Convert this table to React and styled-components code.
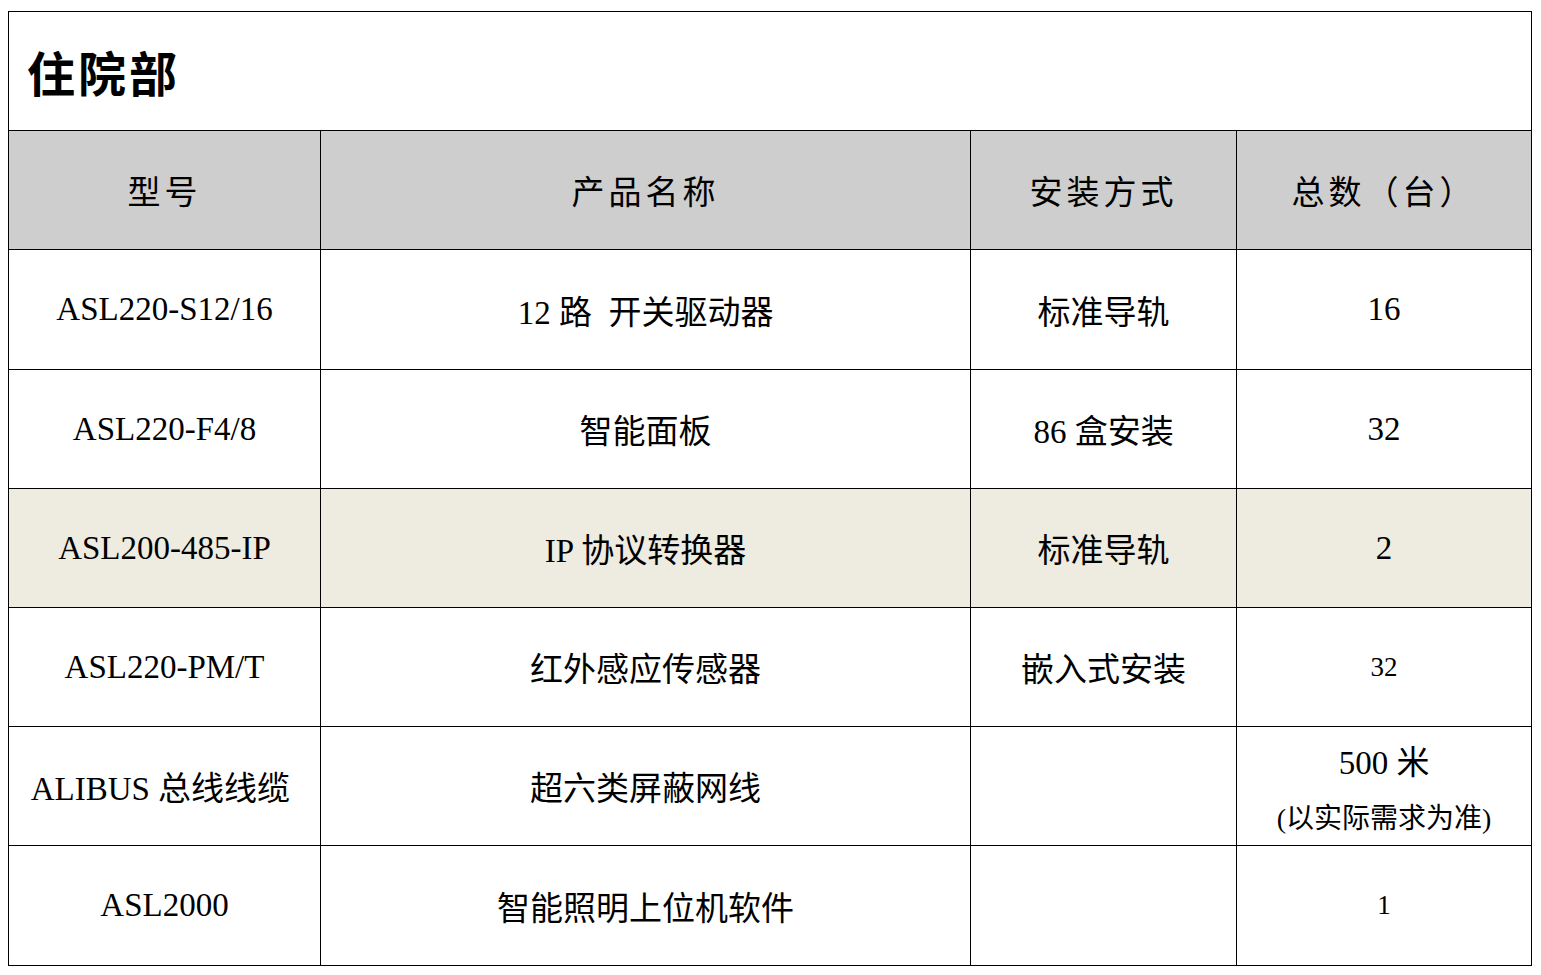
import styled, { createGlobalStyle } from 'styled-components';

const GlobalStyle = createGlobalStyle`
  body {
    margin: 0;
    background: #fff;
    font-family: "Liberation Serif", "Noto Sans CJK SC", serif;
    color: #000;
  }
`;

const Page = styled.div`
  padding: 11px 0 0 8px;
`;

const Table = styled.table`
  width: 1523px;
  border-collapse: collapse;
  table-layout: fixed;
  border: 1px solid #000;
`;

const TitleCell = styled.td`
  height: 118px;
  padding: 0 0 0 18px;
  font-size: 48px;
  font-weight: 700;
  letter-spacing: 3px;
  border: 1px solid #000;
`;

const HeadCell = styled.th`
  height: 116px;
  background: #cecece;
  font-size: 33px;
  font-weight: 400;
  letter-spacing: 4px;
  text-align: center;
  border: 1px solid #000;
`;

const Row = styled.tr`
  background: ${p => (p.$shade ? '#eeebe1' : '#fff')};
`;

const Cell = styled.td`
  height: ${p => (p.$tall ? '119px' : '118px')};
  padding: 0;
  font-size: ${p => (p.$small ? '27px' : '33px')};
  text-align: center;
  border: 1px solid #000;
  white-space: pre;
`;

const Note = styled.div`
  font-size: 28px;
  margin-top: 12px;
`;

const rows = [
  { model: 'ASL220-S12/16', name: '12 路  开关驱动器', mount: '标准导轨', count: '16', tall: true },
  { model: 'ASL220-F4/8', name: '智能面板', mount: '86 盒安装', count: '32' },
  { model: 'ASL200-485-IP', name: 'IP 协议转换器', mount: '标准导轨', count: '2', shade: true },
  { model: 'ASL220-PM/T', name: '红外感应传感器', mount: '嵌入式安装', count: '32', small: true },
  { model: 'ALIBUS 总线线缆 ', name: '超六类屏蔽网线', mount: '', count: '500 米', note: '(以实际需求为准)' },
  { model: 'ASL2000', name: '智能照明上位机软件', mount: '', count: '1', small: true, tall: true },
];

export default function App() {
  return (
    <Page>
      <GlobalStyle />
      <Table>
        <colgroup>
          <col style={{ width: 312 }} />
          <col style={{ width: 650 }} />
          <col style={{ width: 266 }} />
          <col style={{ width: 295 }} />
        </colgroup>
        <tbody>
          <tr>
            <TitleCell colSpan={4}>住院部</TitleCell>
          </tr>
          <tr>
            <HeadCell>型号</HeadCell>
            <HeadCell>产品名称</HeadCell>
            <HeadCell>安装方式</HeadCell>
            <HeadCell>总数（台）</HeadCell>
          </tr>
          {rows.map(r => (
            <Row key={r.model} $shade={r.shade}>
              <Cell $tall={r.tall}>{r.model}</Cell>
              <Cell $tall={r.tall}>{r.name}</Cell>
              <Cell $tall={r.tall}>{r.mount}</Cell>
              <Cell $tall={r.tall} $small={r.small}>
                {r.count}
                {r.note && <Note>{r.note}</Note>}
              </Cell>
            </Row>
          ))}
        </tbody>
      </Table>
    </Page>
  );
}
